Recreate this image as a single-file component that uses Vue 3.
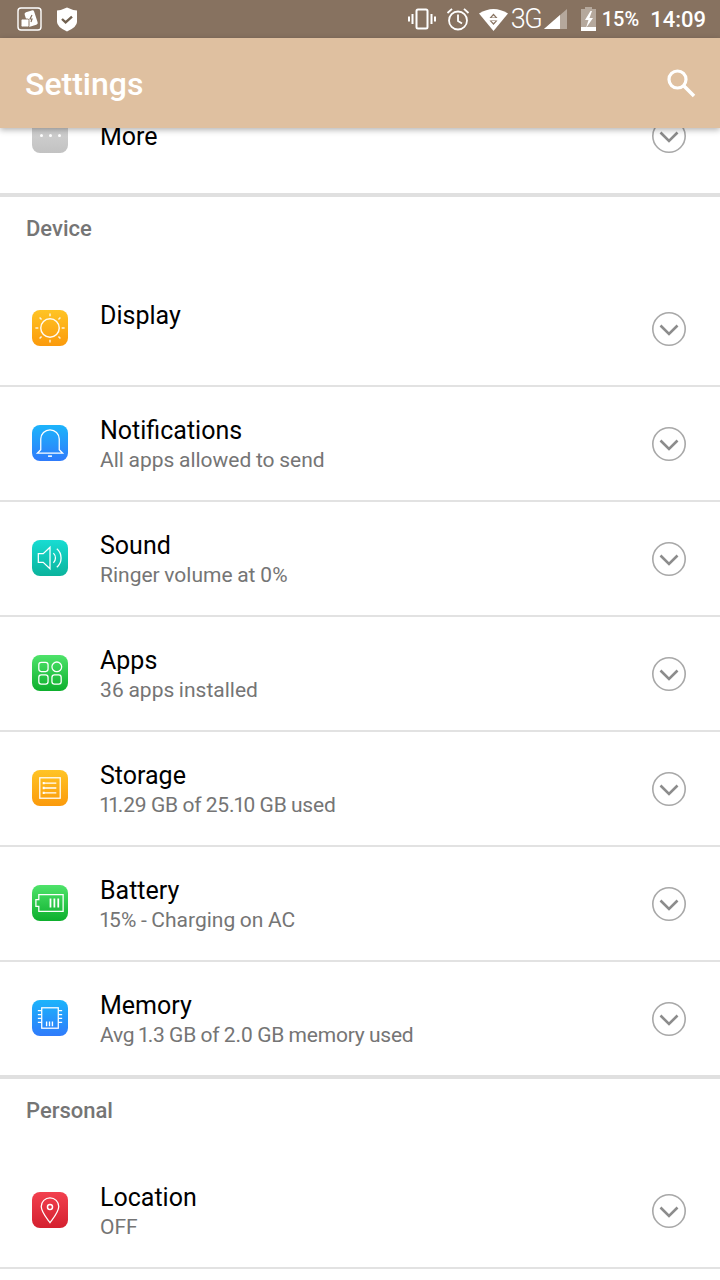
<script setup>
const deviceRows = [
  { id: 'display', title: 'Display', summary: '', colors: ['#ffc425', '#fb9a0c'] },
  { id: 'bell', title: 'Notifications', summary: 'All apps allowed to send', colors: ['#1cb4fb', '#2f7bfb'] },
  { id: 'sound', title: 'Sound', summary: 'Ringer volume at 0%', colors: ['#17dcd2', '#0bb39c'] },
  { id: 'apps', title: 'Apps', summary: '36 apps installed', colors: ['#4ee36a', '#0daf2d'] },
  { id: 'storage', title: 'Storage', summary: '11.29 GB of 25.10 GB used', tight: true, colors: ['#ffc425', '#fb9a0c'] },
  { id: 'battery', title: 'Battery', summary: '15% - Charging on AC', colors: ['#4ee36a', '#0daf2d'] },
  { id: 'memory', title: 'Memory', summary: 'Avg 1.3 GB of 2.0 GB memory used', tight: true, colors: ['#1cb4fb', '#2f7bfb'] }
]

const personalRows = [
  { id: 'location', title: 'Location', summary: 'OFF', colors: ['#f2404e', '#d4202f'] }
]

const sections = [
  { name: 'Device', rows: deviceRows },
  { name: 'Personal', rows: personalRows }
]

const iconBg = (row) => ({
  background: `linear-gradient(${row.colors[0]}, ${row.colors[1]})`
})
</script>

<template>
  <div class="screen">
    <div class="status-bar">
      <div class="status-left">
        <svg class="app-note" width="25" height="24" viewBox="0 0 25 24" fill="none">
          <rect x="1" y="1" width="23" height="22" rx="3" stroke="#fff" stroke-width="1.4" />
          <rect x="9" y="4" width="10" height="15" rx="2" transform="rotate(-18 14 11)" fill="#fff" />
          <path d="M15 8l-2 4h2l-1 3" stroke="#877260" stroke-width="1.2" />
          <rect x="4" y="12" width="8" height="8" rx="1.5" fill="#fff" stroke="#877260" />
        </svg>
        <svg class="shield" width="22" height="25" viewBox="0 0 22 25">
          <path d="M1 3.5Q6 3 11 .5Q16 3 21 3.5V15Q21 20 11 24.5Q1 20 1 15Z" fill="#fff" />
          <path d="M6 12l3.6 3.4L16 9.6" fill="none" stroke="#70604f" stroke-width="2.4" />
        </svg>
      </div>
      <div class="status-right">
        <svg width="28" height="22" viewBox="0 0 28 22" fill="none" stroke="#fff">
          <rect x="8.5" y="1.5" width="11" height="19" rx="1.5" stroke-width="2" />
          <path d="M4.5 6v10M1 8.5v5M23.5 6v10M27 8.5v5" stroke-width="2" />
        </svg>
        <svg class="alarm" width="24" height="24" viewBox="0 0 24 24" fill="none" stroke="#fff" stroke-width="1.8">
          <circle cx="12" cy="13.5" r="9" />
          <path d="M12 7.5v6.5l4 2.5M1.5 6L6 1.8M22.5 6L18 1.8" />
        </svg>
        <svg class="wifi" width="29" height="23" viewBox="0 0 29 23">
          <path d="M0 5.500Q14.500-3.500 29 5.500L14.500 23Z" fill="#fff" />
          <path d="M14.500 5.500l4 4.500h-8zM14.500 17l4-4.500h-8z" fill="#877260" />
          <path d="M14.500 7.500l2 2h-4zM14.500 15l2-2h-4z" fill="#fff" />
        </svg>
        <span class="net">3G</span>
        <svg class="signal" width="23" height="20" viewBox="0 0 23 20">
          <path d="M0 20L23 0V20Z" fill="#b5a89c" />
          <path d="M0 20L16 6.100V20Z" fill="#fff" />
        </svg>
        <svg class="batt" width="15" height="24" viewBox="0 0 15 24">
          <path d="M4 0h7v2h4v22H0V2h4Z" fill="#b5a89c" />
          <path d="M0 20h15v4H0Z" fill="#fff" />
          <path d="M9.500 4L4 13h3.500L5 21l7-10H8.500L11 4Z" fill="#fff" />
        </svg>
        <span class="pct">15%</span>
        <span class="clock">14:09</span>
      </div>
    </div>

    <header class="app-bar">
      <h1 class="app-title">Settings</h1>
      <svg width="30" height="30" viewBox="0 0 30 30" fill="none" stroke="#fff">
        <circle cx="11.500" cy="11.500" r="8.500" stroke-width="3.200" />
        <path d="M18 18l10 10" stroke-width="3.600" />
      </svg>
    </header>

    <main class="content">
      <div class="scroller">
        <div class="row row-more">
          <div class="icon icon-more"><span class="dot" /><span class="dot" /><span class="dot" /></div>
          <div class="text"><div class="title">More</div></div>
          <svg class="chevron" width="36" height="36" viewBox="0 0 36 36" fill="none">
            <circle cx="18" cy="18" r="16.200" stroke="#a8a8a8" stroke-width="1.600" />
            <path d="M9.500 14.500L18 23l8.500-8.500" stroke="#8c8c8c" stroke-width="2.600" />
          </svg>
        </div>

        <section v-for="section in sections" :key="section.name" class="section">
          <div class="section-name">{{ section.name }}</div>
          <div v-for="row in section.rows" :key="row.id" class="row">
            <div class="icon" :style="iconBg(row)">
              <svg width="36" height="36" viewBox="0 0 37 37" fill="none" stroke="#fff" stroke-width="1.300">
                <template v-if="row.id === 'display'">
                  <circle cx="18.500" cy="18.500" r="9.500" stroke-width="1.500" stroke-opacity=".95" />
                  <path d="M18.500 3.500v3M18.500 30.500v3M3.500 18.500h3M30.500 18.500h3M7.800 7.800l2 2M27.200 27.200l2 2M7.800 29.200l2-2M27.200 9.800l2-2" stroke-width="1.500" stroke-opacity=".85" />
                </template>
                <template v-else-if="row.id === 'bell'">
                  <path d="M9 25.500V14.500a9.500 9.500 0 0 1 19 0v11l3.500 3.500H5.500Z" />
                  <path d="M16.500 32h4" stroke-width="1.600" />
                </template>
                <template v-else-if="row.id === 'sound'">
                  <path d="M6.500 14v9h5l7 6.500V7.500l-7 6.500Z" />
                  <path d="M22 13.500a7 7 0 0 1 0 10M25.500 9a12.500 12.500 0 0 1 0 19" />
                </template>
                <template v-else-if="row.id === 'apps'">
                  <rect x="7" y="7.500" width="9.500" height="9.500" rx="2.500" />
                  <circle cx="25.500" cy="12.200" r="5" />
                  <rect x="7" y="20.500" width="9.500" height="9.500" rx="2.500" />
                  <rect x="20.500" y="20.500" width="9.500" height="9.500" rx="2.500" />
                </template>
                <template v-else-if="row.id === 'storage'">
                  <rect x="8" y="8" width="21" height="21" />
                  <path d="M12 13.500h13M12 18.500h13M12 23.500h13" />
                  <path d="M11 13.500h2M11 18.500h2M11 23.500h2" stroke-width="2.400" />
                </template>
                <template v-else-if="row.id === 'battery'">
                  <path d="M7 10h25v17H7v-5H4v-7h3Z" />
                  <path d="M19 14v9M23 14v9M27 14v9" stroke-width="1.800" />
                </template>
                <template v-else-if="row.id === 'memory'">
                  <rect x="10" y="8" width="17" height="21" />
                  <path d="M6 11h4M6 15h4M6 19h4M6 23h4M27 11h4M27 15h4M27 19h4M27 23h4" />
                  <path d="M15 27v-5M18 27v-5M21 27v-5" stroke-width="1.400" />
                </template>
                <template v-else-if="row.id === 'location'">
                  <path d="M18.500 31.500C14 25.500 9.500 20.500 9.500 15a9 9 0 0 1 18 0C27.500 20.500 23 25.500 18.500 31.500Z" />
                  <circle cx="18.500" cy="15.500" r="2.600" stroke-width="1.500" />
                </template>
              </svg>
            </div>
            <div class="text">
              <div class="title">{{ row.title }}</div>
              <div class="summary" :class="{ tight: row.tight }">{{ row.summary }}</div>
            </div>
            <svg class="chevron" width="36" height="36" viewBox="0 0 36 36" fill="none">
              <circle cx="18" cy="18" r="16.200" stroke="#a8a8a8" stroke-width="1.600" />
              <path d="M9.500 14.500L18 23l8.500-8.500" stroke="#8c8c8c" stroke-width="2.600" />
            </svg>
          </div>
        </section>
      </div>
    </main>
  </div>
</template>

<style>
html,
body {
  margin: 0;
  background: #fff;
}
</style>

<style scoped>
.screen {
  width: 720px;
  height: 1280px;
  overflow: hidden;
  display: flex;
  flex-direction: column;
  background: #fff;
  font-family: Roboto, "Liberation Sans", sans-serif;
}

.status-bar {
  height: 38px;
  flex: none;
  background: #877260;
  display: flex;
  align-items: center;
  justify-content: space-between;
  padding: 0 14px 0 17px;
  color: #fff;
}

.status-left,
.status-right {
  display: flex;
  align-items: center;
}

.shield {
  margin-left: 14px;
}

.alarm {
  margin-left: 10px;
}

.wifi {
  margin-left: 9px;
}

.net {
  margin-left: 3px;
  width: 31px;
  font-size: 27px;
  font-weight: 300;
  letter-spacing: -1.500px;
}

.signal {
  margin-left: 2px;
}

.batt {
  margin-left: 14px;
}

.pct {
  margin-left: 6px;
  font-size: 20px;
  font-weight: 500;
}

.clock {
  margin-left: 11px;
  font-size: 22px;
  font-weight: 500;
}

.app-bar {
  height: 90px;
  flex: none;
  position: relative;
  z-index: 2;
  background: #dfc0a0;
  box-shadow: 0 2px 6px rgba(0, 0, 0, .3);
  display: flex;
  align-items: center;
  justify-content: space-between;
  padding: 0 24px 0 25px;
}

.app-title {
  margin: 2px 0 0;
  color: #fff;
  font-size: 32px;
  font-weight: 500;
}

.content {
  flex: 1;
  min-height: 0;
  overflow: hidden;
}

.scroller {
  margin-top: -50px;
}

.section {
  border-top: 4px solid #e0e0e0;
}

.section-name {
  height: 75px;
  padding: 20px 0 0 26px;
  box-sizing: border-box;
  color: #757575;
  font-size: 22px;
  font-weight: 500;
  line-height: 24px;
}

.row {
  height: 115px;
  box-sizing: border-box;
  display: flex;
  align-items: center;
  padding: 0 33px 0 32px;
  border-bottom: 2px solid #e2e2e2;
}

.section .row:last-child {
  height: 113px;
  border-bottom: 0;
}

.section:last-child .row:last-child {
  height: 115px;
  border-bottom: 2px solid #e2e2e2;
}

.row-more {
  border-bottom: 0;
}

.icon {
  width: 36px;
  height: 36px;
  flex: none;
  margin-top: -1px;
  border-radius: 8px;
  display: flex;
  align-items: center;
  justify-content: center;
}

.icon svg {
  display: block;
}

.icon-more {
  gap: 6px;
  background: linear-gradient(#d8d8d8, #c2c2c2);
}

.dot {
  width: 3px;
  height: 3px;
  border-radius: 50%;
  background: #fff;
}

.text {
  flex: 1;
  min-width: 0;
  margin-left: 32px;
}

.title {
  height: 30px;
  color: #000;
  font-size: 25px;
  line-height: 34px;
}

.row-more .title {
  line-height: 32px;
}

.summary {
  height: 30px;
  color: #757575;
  font-size: 21px;
  line-height: 32px;
  word-spacing: -.6px;
  font-variant-numeric: proportional-nums;
}

.summary.tight {
  letter-spacing: -.2px;
}

.chevron {
  flex: none;
}
</style>
